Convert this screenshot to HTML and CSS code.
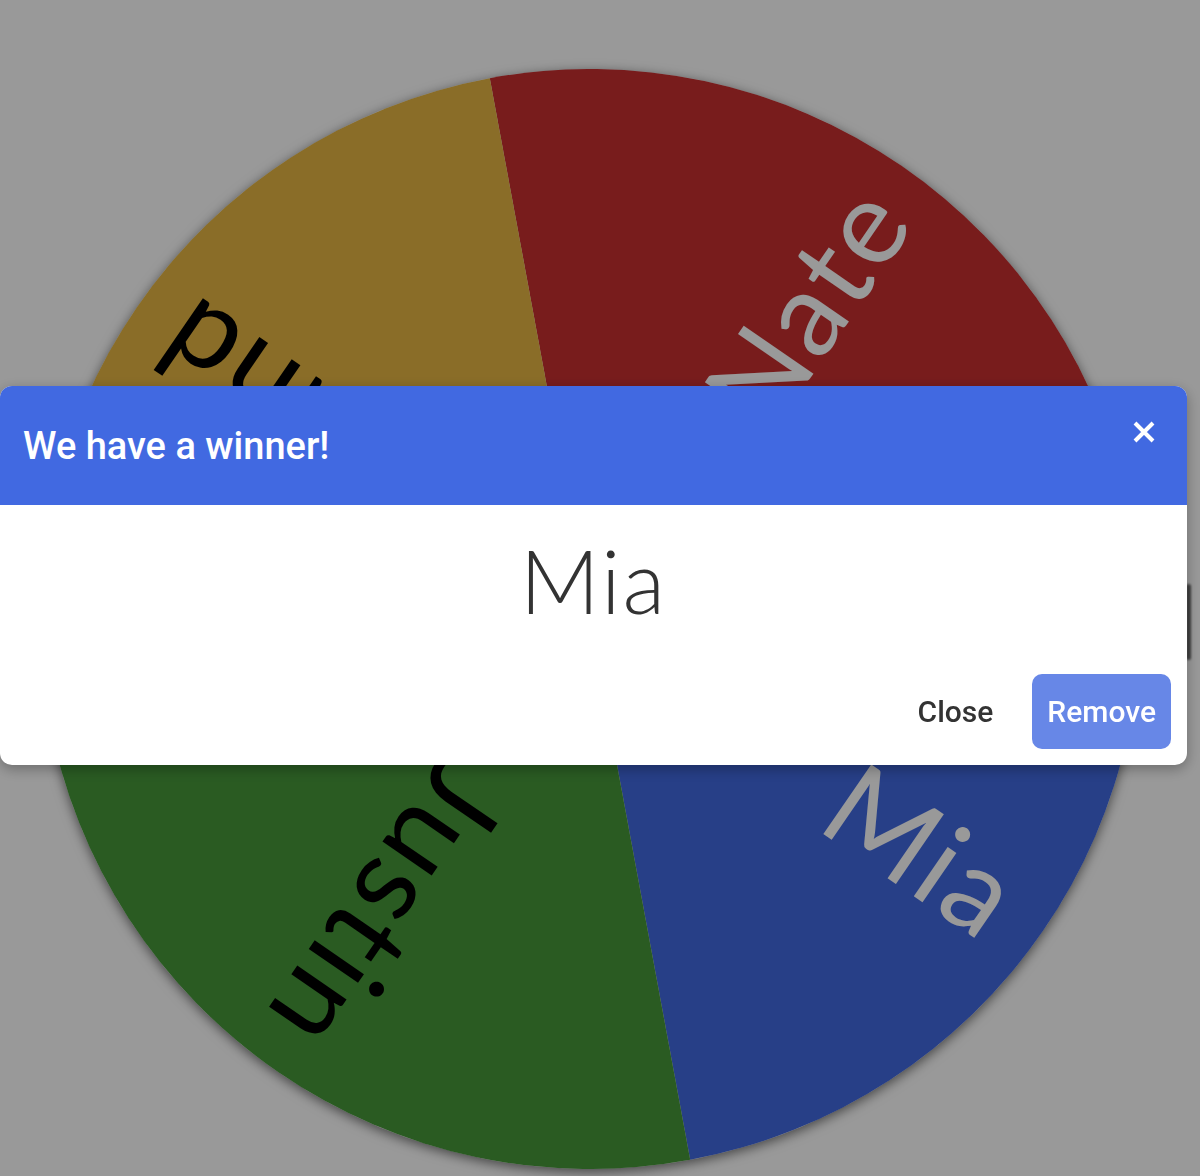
FILE: index.html
```html
<!DOCTYPE html>
<html lang="en">
<head>
<meta charset="utf-8">
<title>Wheel – We have a winner!</title>
<link rel="stylesheet" href="styles.css">
</head>
<body>
<main class="stage">
  <div class="wheel">
    <svg class="wheel-svg" viewBox="-550 -550 1100 1100" width="1100" height="1100">
      <path class="seg seg-red" d="M0 0 L-100.2 -540.8 A550 550 0 0 1 540.8 -100.2 Z"/>
      <path class="seg seg-blue" d="M0 0 L540.8 -100.2 A550 550 0 0 1 100.2 540.8 Z"/>
      <path class="seg seg-green" d="M0 0 L100.2 540.8 A550 550 0 0 1 -540.8 100.2 Z"/>
      <path class="seg seg-gold" d="M0 0 L-540.8 100.2 A550 550 0 0 1 -100.2 -540.8 Z"/>
      <text class="label label-light" transform="rotate(-55.5)" x="512" y="45" text-anchor="end">Nate</text>
      <text class="label label-light" transform="rotate(34.5)" x="508" y="45" text-anchor="end">Mia</text>
      <text class="label label-dark" transform="rotate(124.5)" x="512" y="45" text-anchor="end">Justin</text>
      <text class="label label-dark" transform="rotate(214.5)" x="512" y="45" text-anchor="end">Roland</text>
    </svg>
  </div>
  <div class="pointer"></div>
</main>

<div class="overlay"></div>

<div class="modal" role="dialog" aria-labelledby="modal-title">
  <header class="modal-header">
    <h2 id="modal-title" class="modal-title">We have a winner!</h2>
    <button class="modal-close" aria-label="Close">
      <svg viewBox="0 0 22 22" width="22" height="22"><path d="M2 2 L20 20 M20 2 L2 20"/></svg>
    </button>
  </header>
  <div class="modal-body">
    <p class="winner">Mia</p>
  </div>
  <footer class="modal-footer">
    <button class="btn btn-text">Close</button>
    <button class="btn btn-primary">Remove</button>
  </footer>
</div>
</body>
</html>
```

FILE: styles.css
```css
html, body {
  margin: 0;
  padding: 0;
}

body {
  background: #ffffff;
  width: 1200px;
  height: 1176px;
  overflow: hidden;
  font-family: "Roboto", "Liberation Sans", sans-serif;
}

.stage {
  position: relative;
  padding: 69px 0 0 40px;
  height: 1107px;
}

.wheel {
  width: 1100px;
  height: 1100px;
  border-radius: 50%;
  box-shadow: 0 3px 12px rgba(0, 0, 0, 0.55);
}

.wheel-svg {
  display: block;
}

.seg-red { fill: #c82f30; }
.seg-blue { fill: #4169e1; }
.seg-green { fill: #46983a; }
.seg-gold { fill: #e6b643; }

.label {
  font-family: "Lato", "Open Sans", sans-serif;
  font-weight: 400;
  font-size: 118px;
  letter-spacing: 3px;
}

.label-light { fill: #ffffff; }
.label-dark { fill: #000000; }

.pointer {
  position: absolute;
  left: 1186px;
  top: 584px;
  width: 5px;
  height: 76px;
  background: #6a6a6a;
  border-radius: 3px;
  filter: blur(1px);
}

.overlay {
  position: fixed;
  inset: 0;
  background: rgba(0, 0, 0, 0.4);
}

.modal {
  position: fixed;
  top: 386px;
  left: 0;
  width: 1187px;
  background: #ffffff;
  border-radius: 12px;
  overflow: hidden;
  box-shadow: 0 4px 14px rgba(0, 0, 0, 0.3);
}

.modal-header {
  height: 119px;
  background: #4169e1;
  display: flex;
  align-items: center;
  justify-content: space-between;
  padding: 0 32px 0 23px;
  box-sizing: border-box;
}

.modal-title {
  margin: 0;
  color: #ffffff;
  font-size: 38px;
  font-weight: 500;
  line-height: 1;
  padding-top: 1px;
}

.modal-close {
  align-self: flex-start;
  margin-top: 35px;
  padding: 0;
  border: 0;
  background: transparent;
  width: 22px;
  height: 22px;
}

.modal-close svg {
  display: block;
}

.modal-close path {
  stroke: #ffffff;
  stroke-width: 4;
  fill: none;
}

.modal-body {
  padding: 23px 16px 40px;
  text-align: center;
}

.winner {
  margin: 0;
  font-family: "Lato", "Open Sans", sans-serif;
  font-weight: 300;
  font-size: 88px;
  letter-spacing: 2px;
  line-height: 1.2;
  color: #333333;
}

.modal-footer {
  display: flex;
  justify-content: flex-end;
  align-items: center;
  gap: 24px;
  padding: 0 16px 16px;
}

.btn {
  height: 75px;
  padding: 0 15px;
  border: 0;
  border-radius: 10px;
  font-family: "Roboto", "Liberation Sans", sans-serif;
  font-size: 30px;
  font-weight: 500;
  cursor: pointer;
}

.btn-text {
  background: transparent;
  color: #333333;
}

.btn-primary {
  background: #6787e7;
  color: #ffffff;
}
```
